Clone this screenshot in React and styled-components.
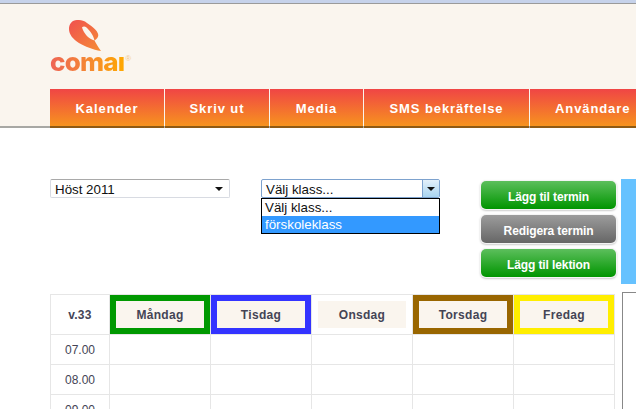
import React from "react";
import styled, { createGlobalStyle } from "styled-components";

const GlobalStyle = createGlobalStyle`
  html, body {
    margin: 0;
    padding: 0;
    background: #fff;
    overflow: hidden;
  }
  body {
    font-family: "Liberation Sans", Arial, sans-serif;
  }
`;

const Page = styled.div`
  width: 636px;
  height: 409px;
  overflow: hidden;
`;

const Header = styled.header`
  height: 128px;
  box-sizing: border-box;
  background: #faf5ee;
  border-top: 3px solid #c6d2ea;
  border-bottom: 2px solid #a8a8a4;
  display: flex;
  flex-direction: column;
  position: relative;
`;

const TopLine = styled.div`
  height: 1px;
  background: #9a9a9a;
`;

const LogoWrap = styled.div`
  height: 85px;
  padding-left: 50px;
  display: flex;
  flex-direction: column;
  align-items: flex-start;
`;

const LogoMark = styled.svg`
  display: block;
  margin: 16px 0 0 19px;
`;

const LogoRow = styled.div`
  display: flex;
  align-items: flex-start;
  height: 20px;
`;

const LogoText = styled.span`
  font-family: "Inter", sans-serif;
  font-weight: 800;
  font-size: 26px;
  line-height: 20px;
  letter-spacing: -0.8px;
  background: linear-gradient(90deg, #ee6455 0%, #f58a30 55%, #ffa800 100%);
  -webkit-background-clip: text;
  background-clip: text;
  color: transparent;
`;

const LogoReg = styled.span`
  font-size: 8px;
  line-height: 8px;
  color: #f3c98a;
  margin: 3px 0 0 1px;
`;

const Nav = styled.nav`
  margin: 0 0 -2px 50px;
  height: 39px;
  display: flex;
  overflow: hidden;
`;

const NavItem = styled.a`
  flex: none;
  width: ${({ $w }) => $w}px;
  box-sizing: border-box;
  height: 39px;
  display: flex;
  align-items: center;
  justify-content: ${({ $left }) => ($left ? "flex-start" : "center")};
  padding-left: ${({ $left }) => ($left ? "25px" : "0")};
  margin-right: 1px;
  background: linear-gradient(#f04545 0%, #f7931e 95%, #8f5a14 95%);
  color: #fff;
  font-size: 13px;
  font-weight: 700;
  letter-spacing: 0.9px;
  white-space: nowrap;
`;

const Controls = styled.section`
  display: flex;
  align-items: flex-start;
  padding: 51px 0 0 50px;
  height: 115px;
`;

const SelectBox = styled.div`
  position: relative;
  width: ${({ $w }) => $w}px;
  margin-right: ${({ $mr }) => $mr}px;
  flex: none;
`;

const SelectField = styled.div`
  height: 19px;
  box-sizing: border-box;
  display: flex;
  align-items: center;
  justify-content: space-between;
  background: #fff;
  border: 1px solid ${({ $open }) => ($open ? "#7da2ce" : "#d8dbe2")};
  border-top-color: ${({ $open }) => ($open ? "#7da2ce" : "#a9a9a9")};
  border-radius: 2px;
  padding-left: 4px;
  font-size: 13.33px;
  color: #111;
`;

const FieldText = styled.span`
  padding-top: 1px;
`;

const PlainArrow = styled.span`
  width: 0;
  height: 0;
  margin-right: 6px;
  border-left: 4px solid transparent;
  border-right: 4px solid transparent;
  border-top: 4px solid #111;
`;

const ArrowButton = styled.span`
  width: 16px;
  height: 17px;
  display: flex;
  align-items: center;
  justify-content: center;
  background: linear-gradient(#e3f0fa, #a9d4ef);
  border-left: 1px solid #7da2ce;
  border-radius: 0 1px 1px 0;
  &::after {
    content: "";
    width: 0;
    height: 0;
    border-left: 4px solid transparent;
    border-right: 4px solid transparent;
    border-top: 4px solid #111;
  }
`;

const DropList = styled.div`
  position: absolute;
  top: 19px;
  left: 0;
  width: 100%;
  box-sizing: border-box;
  background: #fff;
  border: 1px solid #000;
  font-size: 13.33px;
  color: #111;
`;

const DropOption = styled.div`
  height: 17px;
  line-height: 18px;
  padding-left: 3px;
  background: ${({ $active }) => ($active ? "#3399ff" : "#fff")};
  color: ${({ $active }) => ($active ? "#fff" : "#111")};
`;

const ButtonColumn = styled.div`
  flex: none;
  width: 135px;
  margin-top: 2px;
  margin-right: 5px;
  display: flex;
  flex-direction: column;
  gap: 6px;
`;

const ActionButton = styled.button`
  height: 28px;
  padding: 3px 0 0;
  border: 0;
  border-radius: 5px;
  font-family: inherit;
  font-size: 12px;
  font-weight: 700;
  letter-spacing: -0.1px;
  color: #fff;
  background: ${({ $grey }) =>
    $grey
      ? "linear-gradient(#9c9c9c, #666)"
      : "linear-gradient(#5cbf5c, #009500)"};
  box-shadow: 0 0 0 1px #f4f4f4, 0 1px 2px 1px #ccc;
`;

const BluePanel = styled.div`
  flex: none;
  width: 15px;
  height: 105px;
  background: #66c2ff;
`;

const BottomRow = styled.section`
  display: flex;
  align-items: flex-start;
  padding: 0 0 0 50px;
`;

const Schedule = styled.div`
  flex: none;
  display: grid;
  grid-template-columns: 58px repeat(5, 100px);
  grid-template-rows: 39px;
  grid-auto-rows: 29px;
  gap: 1px;
  padding: 1px;
  background: #e6e6e6;
  color: #445;
  font-size: 12px;
`;

const WeekCell = styled.div`
  background: #fff;
  display: flex;
  align-items: center;
  justify-content: center;
  font-weight: 700;
  letter-spacing: 0.3px;
`;

const DayCell = styled.div`
  box-sizing: border-box;
  border: 6px solid ${({ $color }) => $color};
  background: #faf5ee;
  display: flex;
  align-items: center;
  justify-content: center;
  font-weight: 700;
  letter-spacing: 0.3px;
`;

const TimeCell = styled.div`
  background: #fff;
  display: flex;
  align-items: center;
  justify-content: center;
`;

const SlotCell = styled.div`
  background: #fff;
`;

const SideBox = styled.div`
  flex: none;
  width: 30px;
  height: 130px;
  margin: -2px 0 0 7px;
  box-sizing: border-box;
  border: 1px solid #888;
`;

const days = [
  ["Måndag", "#009900"],
  ["Tisdag", "#3333ff"],
  ["Onsdag", "#fff"],
  ["Torsdag", "#996600"],
  ["Fredag", "#ffee00"],
];

const navItems = [
  ["Kalender", 114],
  ["Skriv ut", 104],
  ["Media", 93],
  ["SMS bekräftelse", 165],
];

const times = ["07.00", "08.00", "09.00"];

const App = () => (
  <Page>
    <GlobalStyle />
    <Header>
      <TopLine />
      <LogoWrap>
        <LogoMark width="33" height="32" viewBox="0 0 33 32">
          <defs>
            <linearGradient id="swirl" x1="0" y1="0" x2="1" y2="1">
              <stop offset="0" stopColor="#f0504f" />
              <stop offset="1" stopColor="#f58d35" />
            </linearGradient>
          </defs>
          <path
            fillRule="evenodd"
            fill="url(#swirl)"
            d="M8 0C3 0 0 4 0 9C0 20 16 28 32 31C29 27 27 23 25.500 20.500C28 19 29.300 17 29.300 15C29 10 21 5 16 1.500C13 0.300 11 0 8 0ZM13 7.500C14 6 16 6 17.500 7.500C20 10 24 14 25.500 20.500C20 19 15 14 13 7.500Z"
          />
        </LogoMark>
        <LogoRow>
          <LogoText>comaı</LogoText>
          <LogoReg>®</LogoReg>
        </LogoRow>
      </LogoWrap>
      <Nav>
        {navItems.map(([label, w]) => (
          <NavItem key={label} $w={w}>
            {label}
          </NavItem>
        ))}
        <NavItem $w={130} $left>
          Användare
        </NavItem>
      </Nav>
    </Header>

    <Controls>
      <SelectBox $w={180} $mr={31}>
        <SelectField>
          <FieldText>Höst 2011</FieldText>
          <PlainArrow />
        </SelectField>
      </SelectBox>
      <SelectBox $w={179} $mr={41}>
        <SelectField $open>
          <FieldText>Välj klass...</FieldText>
          <ArrowButton />
        </SelectField>
        <DropList>
          <DropOption>Välj klass...</DropOption>
          <DropOption $active>förskoleklass</DropOption>
        </DropList>
      </SelectBox>
      <ButtonColumn>
        <ActionButton>Lägg til termin</ActionButton>
        <ActionButton $grey>Redigera termin</ActionButton>
        <ActionButton>Lägg til lektion</ActionButton>
      </ButtonColumn>
      <BluePanel />
    </Controls>

    <BottomRow>
      <Schedule>
        <WeekCell>v.33</WeekCell>
        {days.map(([name, color]) => (
          <DayCell key={name} $color={color}>
            {name}
          </DayCell>
        ))}
        {times.map((time) => (
          <React.Fragment key={time}>
            <TimeCell>{time}</TimeCell>
            {days.map(([name]) => (
              <SlotCell key={name} />
            ))}
          </React.Fragment>
        ))}
      </Schedule>
      <SideBox />
    </BottomRow>
  </Page>
);

export default App;
